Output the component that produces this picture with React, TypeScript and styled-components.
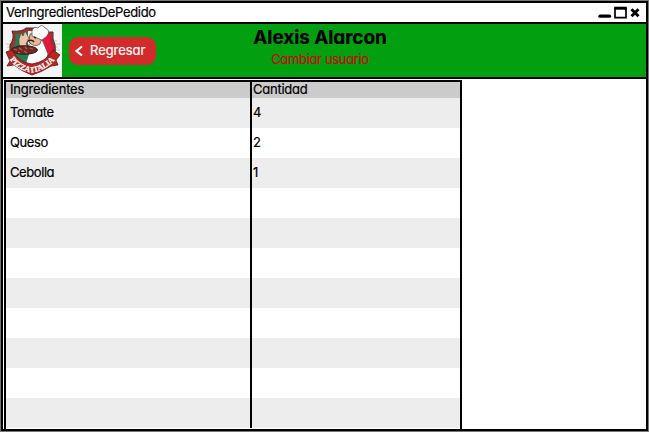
import React from "react";
import styled, { createGlobalStyle } from "styled-components";

const Global = createGlobalStyle`
  * { box-sizing: border-box; }
  body { margin: 0; background: #fff; overflow: hidden; }
`;

const Window = styled.main`
  width: 649px;
  height: 432px;
  padding: 1px 1px 0 1px;
  background: #fff;
  color: #000;
  font: 13px/16px Inter, "Liberation Sans", sans-serif;
  font-feature-settings: "cv11";
  white-space: nowrap;
`;

const Frame = styled.div`
  height: 430px;
  display: flex;
  flex-direction: column;
  border: 2px solid #000;
  box-shadow: 0 0 0 1px #777;
`;

const TitleBar = styled.header`
  flex: 0 0 21px;
  display: flex;
  align-items: center;
  justify-content: space-between;
  padding: 0 5px 1px 3px;
  border-bottom: 2px solid #000;
`;

const Banner = styled.section`
  flex: 0 0 55px;
  display: flex;
  border-bottom: 2px solid #000;
  background: #029f11;
`;

const Logo = styled.svg`
  flex: none;
  width: 59px;
  height: 53px;
  background: #f5f5f5;
`;

const BackButton = styled.button`
  width: 87px;
  height: 28px;
  margin: 13px 0 0 7px;
  padding: 0 0 2px 5px;
  display: flex;
  align-items: center;
  gap: 7px;
  border: 0;
  border-radius: 9px;
  background: #d12b2b;
  color: #fff;
  font: inherit;
  font-feature-settings: inherit;
`;

const Account = styled.div`
  width: 180px;
  margin-left: 74px;
  display: flex;
  flex-direction: column;
  align-items: center;
`;

const Text = styled.span<{ $spacing?: number }>`
  letter-spacing: ${(p) => p.$spacing ?? 0}px;
  -webkit-text-stroke: 0.2px currentColor;
`;

const UserName = styled.h1`
  margin: 2px 0 0;
  font-size: 19px;
  line-height: 24px;
  font-weight: 700;
`;

const ChangeUser = styled.a`
  margin-top: 1px;
  color: #c80808;
`;

const Table = styled.section`
  width: 458px;
  height: 349px;
  margin: 1px 0 0 1px;
  display: grid;
  grid-template-columns: 246px 1fr;
  grid-template-rows: 16px repeat(11, 30px);
  border: 2px solid #000;
  border-bottom: 0;
`;

const Cell = styled.div<{ $fill: string; $first: boolean; $head?: boolean }>`
  padding: ${(p) => (p.$head ? 0 : 7)}px 0 0 ${(p) => (p.$first ? 4 : 1)}px;
  line-height: ${(p) => (p.$head ? 14 : 15)}px;
  border-right: ${(p) => (p.$first ? "2px solid #000" : "0")};
  background: ${(p) => p.$fill};
`;

const rows: [string, string][] = [
  ["Tomate", "4"],
  ["Queso", "2"],
  ["Cebolla", "1"],
  ...Array.from({ length: 8 }, (): [string, string] => ["", ""]),
];

function PizzaLogo() {
  return (
    <Logo viewBox="0 0 59 53" aria-label="Pizza Italia">
      <g stroke="#bdc9cf" strokeWidth="1">
        <path d="M6 17H54M3 20H57M4 23H55M5 26H57" />
      </g>
      <path d="M9 7Q19 8 23 4H34Q38 9 50 8Q49 15 52 21Q54 32 45 39Q37 45 29 48Q20 44 13 38Q6 31 7 21Q12 14 9 7Z" fill="#a92b2a" stroke="#422d25" />
      <path d="M12 10Q20 10 25 7V41Q10 34 10 23Q14 17 12 10Z" fill="#1c8155" />
      <path d="M25 7H34V43H25Z" fill="#eee" />
      <path d="M36 9Q41 12 48 10Q46 17 49 22Q50 32 42 38L34 42Z" fill="#e5173e" />
      <path d="M29 18Q39 12 41 20L45 30L41 43L29 46L23 38L26 29L22 24Z" fill="#fff" stroke="#4b4440" strokeWidth=".7" />
      <path d="M27 10Q34 8 39 14L37 20Q31 24 26 18Z" fill="#e8b596" stroke="#573a30" strokeWidth=".7" />
      <path d="M29 12L29 7Q30 2 35 4Q39 -1 42 4Q48 6 44 12L39 16Z" fill="#fff" stroke="#554e49" strokeWidth=".7" />
      <path d="M25 17Q29 15 31 18M31 13L33 14" fill="none" stroke="#25221e" strokeWidth="1.5" />
      <path d="M16 15L18 9L20 12L22 7L26 14L23 20L26 25L21 27L16 20Z" fill="#edc4a5" stroke="#57413a" strokeWidth=".7" />
      <ellipse cx="21.5" cy="26" rx="13" ry="4.3" fill="#702920" stroke="#2d211c" />
      <path d="M11 25l3 1m2-2l3 2m3-3l2 2m3-1l3 1M15 28l2 1m4-2l3 2" stroke="#bd6050" strokeWidth="1.3" />
      <path d="M3 28L9 26Q16 39 29 40Q43 38 50 26L57 31L53 36L55 41L48 42Q39 48 29 51Q18 47 11 41L4 42L7 37Z" fill="#ba2522" stroke="#591b18" strokeWidth=".8" />
      <path id="ribbon" d="M5 33Q14 47 29 48.5Q45 46 54 33" fill="none" />
      <text fill="#fff" stroke="#fff" strokeWidth=".25" fontFamily="Liberation Serif" fontSize="8" fontWeight="700">
        <textPath href="#ribbon" startOffset="3" textLength="53">PIZZA ITALIA</textPath>
      </text>
    </Logo>
  );
}

export default function App() {
  return (
    <>
      <Global />
      <Window>
        <Frame>
          <TitleBar>
            <Text $spacing={-0.31}>VerIngredientesDePedido</Text>
            <svg width="43" height="14" viewBox="0 0 43 14">
              <path d="M2 11.2H11.5" stroke="#000" strokeWidth="3.3" strokeLinecap="round" />
              <path d="M17 3.2H28V12.7H17Z" fill="none" stroke="#000" strokeWidth="1.7" />
              <path d="M16.5 3.2H28.5" stroke="#000" strokeWidth="3" />
              <path d="M33.5 4.2L40.5 11.2M40.5 4.2L33.5 11.2" stroke="#000" strokeWidth="3" />
            </svg>
          </TitleBar>
          <Banner>
            <PizzaLogo />
            <BackButton>
              <svg width="9" height="11" viewBox="0 0 9 11">
                <path d="M8 1.5L2.5 6L8 10.5" fill="none" stroke="#fff" strokeWidth="2.2" />
              </svg>
              <Text $spacing={-0.05}>Regresar</Text>
            </BackButton>
            <Account>
              <UserName><Text $spacing={-0.1}>Alexis Alarcon</Text></UserName>
              <ChangeUser><Text $spacing={-0.34}>Cambiar usuario</Text></ChangeUser>
            </Account>
          </Banner>
          <Table>
            <Cell $fill="#cbcbcb" $first $head><Text $spacing={-0.18}>Ingredientes</Text></Cell>
            <Cell $fill="#cbcbcb" $first={false} $head><Text $spacing={-0.25}>Cantidad</Text></Cell>
            {rows.map(([name, amount], i) => (
              <React.Fragment key={i}>
                <Cell $fill={i % 2 ? "#fff" : "#ededed"} $first><Text $spacing={-0.42}>{name}</Text></Cell>
                <Cell $fill={i % 2 ? "#fff" : "#ededed"} $first={false}><Text>{amount}</Text></Cell>
              </React.Fragment>
            ))}
          </Table>
        </Frame>
      </Window>
    </>
  );
}
